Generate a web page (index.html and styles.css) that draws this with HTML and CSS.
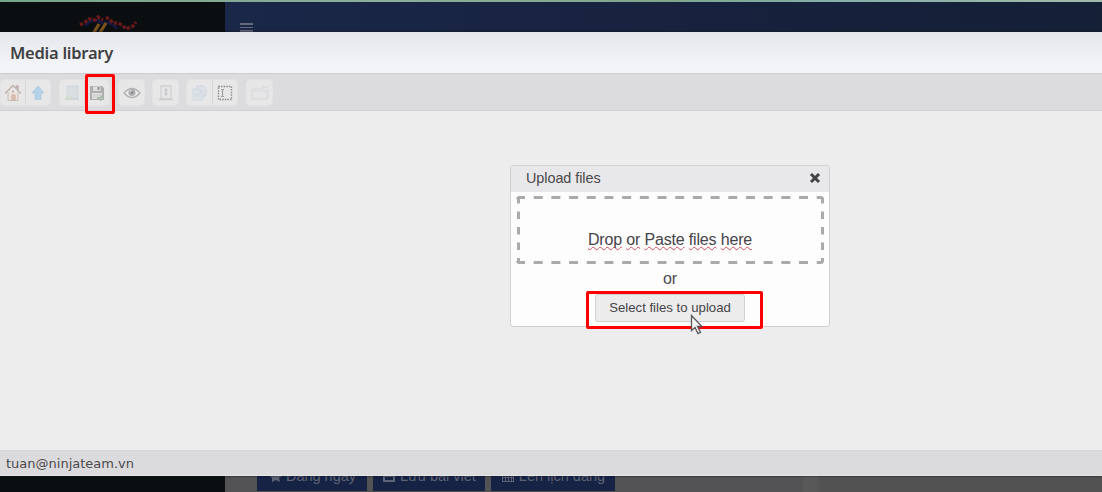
FILE: index.html
```html
<!DOCTYPE html>
<html lang="en">
<head>
<meta charset="utf-8">
<title>Media library</title>
<link rel="stylesheet" href="styles.css">
</head>
<body>
<div class="page">
  <div class="strip"></div>
  <div class="page-body">
    <aside class="sidebar">
      <svg class="brand" width="66" height="22" viewBox="0 0 66 22">
        <path d="M7 12c5-6 12-8 16-3 9-1 13 1 16 6" fill="none" stroke="#14183c" stroke-width="3"/>
        <path d="M15 20l6-10M21 20l7-11" stroke="#79521b" stroke-width="3.2"/>
        <path d="M2 11l5-3 4-3 6 1 3-3 5 3M28 3l4 3 3 3 5 0 4 2 4 4 7-3 3-4" fill="none" stroke="#65191a" stroke-width="3.4" stroke-dasharray="3.5 1.5"/>
      </svg>
    </aside>
    <main class="content">
      <header class="navbar"><span class="burger"><i></i><i></i><i></i></span></header>
      <div class="workspace">
        <div class="panel">
          <div class="post-actions">
            <div class="post-btn now"><svg width="14" height="14" viewBox="0 0 14 14"><path d="M0 2l5 3 4-4 1 4 4 2-3 2 1 4-4-2-4 2V9L1 6z"/></svg>Đăng ngay</div>
            <div class="post-btn save"><svg width="14" height="14" viewBox="0 0 14 14"><path d="M1 1h10l2 2v10H1zM3 8h8v3H3z" fill-rule="evenodd"/></svg>Lưu bài viết</div>
            <div class="post-btn plan"><svg width="14" height="14" viewBox="0 0 14 14"><path d="M1 2h12v11H1zM2 6v2h2V6zm3 0v2h2V6zm3 0v2h2V6zM2 9v3h2V9zm3 0v3h2V9zm3 0v3h2V9zm3-3v2h1V6zm0 3v3h1V9z" fill-rule="evenodd"/></svg>Lên lịch đăng</div>
          </div>
        </div>
        <div class="panel-edge"></div>
      </div>
    </main>
  </div>
</div>

<section class="modal">
  <header class="modal-head"><h1>Media library</h1></header>
  <div class="toolbar">
    <div class="tools home-tools">
      <div class="tool"><svg width="18" height="18" viewBox="0 0 18 18" fill="none"><path d="M4 8v8.500h10V8" fill="#e9e2df" stroke="#c9beb9"/><path d="M1 9.500L9 1.500l8 8M12.500 4V2h1.500v4" stroke="#bdb3ae" stroke-width="1.400"/><path d="M8 16v-5h3v5z" fill="#e0c4b8" stroke="#cfaa9a"/><path d="M9 6.500v2" stroke="#cdb0a5" stroke-width="2"/></svg></div>
      <div class="tool"><svg width="18" height="18" viewBox="0 0 18 18"><path d="M9 2l6 7h-3v6.500H6V9H3z" fill="#b3d2e8" stroke="#a8c6da" stroke-width=".7"/></svg></div>
    </div>
    <div class="tools upload-tools">
      <div class="tool faint"><svg width="18" height="18" viewBox="0 0 18 18"><path d="M4 2h11v13H4z" fill="#d6dce3" stroke="#ccd2d8"/><path d="M2 15h14" stroke="#cfcfd1" stroke-width="2"/><path d="M2 14l4-3v2h4v2H6v2z" fill="#c9dccb"/></svg></div>
      <div class="tool selected"><svg width="18" height="18" viewBox="0 0 18 18"><path d="M2 2h12l2 2v12H2z" fill="#adacae"/><path d="M5 2.500h7.500V7H5z" fill="#deddde"/><path d="M9.500 3h2v3h-2z" fill="#99999b"/><path d="M4 9h10v6H4z" fill="#e1e0e1"/><path d="M5 11h7M5 13h5" stroke="#cbcacc"/><path d="M9 13h3v-2.500l4.500 4-4.500 3v-2.500H9z" fill="#a8beaf"/></svg><span class="mark tool-mark"></span></div>
    </div>
    <div class="tools view-tools">
      <div class="tool"><svg width="18" height="18" viewBox="0 0 18 18"><path d="M1 9q8-9 16 0-8 9-16 0z" fill="#eeeded" stroke="#b1b0b2" stroke-width="1.300"/><circle cx="9" cy="8.500" r="3.600" fill="#b0b0b2"/><circle cx="9" cy="8.500" r="1.400" fill="#89898c"/><circle cx="7.800" cy="7.300" r=".8" fill="#eee"/></svg></div>
    </div>
    <div class="tools info-tools">
      <div class="tool"><svg width="18" height="18" viewBox="0 0 18 18"><path d="M4 2h10v13H4z" fill="#e6e5e7" stroke="#d0cfd2" stroke-width="1.300"/><path d="M2 15.500h14" stroke="#cbcbcd" stroke-width="1.500"/><path d="M9 4l2 2.500H9.700v3H11L9 12 7 9.500h1.300v-3H7z" fill="#c4c3c6"/></svg></div>
    </div>
    <div class="tools edit-tools">
      <div class="tool"><svg width="18" height="18" viewBox="0 0 18 18"><path d="M6 2h6l3 3v7H6z" fill="#dfe3e8" stroke="#cdd5dd"/><path d="M2 5h7l3 3v8H2z" fill="#dde2e8" stroke="#d0d7de"/><path d="M9 5v3h3M4 10h6M4 12h6" fill="none" stroke="#cfd7df"/></svg></div>
      <div class="tool"><svg width="18" height="18" viewBox="0 0 18 18" fill="none"><path d="M2.500 2.500h13v13h-13z" stroke="#8c8b8e" stroke-width="1.400" stroke-dasharray="1.500 1.100"/><path d="M5 5.500h3M6.500 5.500v7M5 12.500h3" stroke="#a09fa2" stroke-width="1.200"/></svg></div>
    </div>
    <div class="tools folder-tools">
      <div class="tool"><svg width="18" height="18" viewBox="0 0 18 18" fill="#e6e5e7"><path d="M1 15V5h10l1-2h5v12z" stroke="#d8d7d9"/><path d="M1 7h15v8H1z" stroke="#dad9db"/></svg></div>
    </div>
  </div>
  <div class="files">
    <div class="dialog">
      <div class="dialog-head"><span>Upload files</span><svg width="12" height="12" viewBox="0 0 12 12"><path d="M2 2l8 8M10 2l-8 8" stroke="#434145" stroke-width="3"/></svg></div>
      <div class="drop">
        <svg class="drop-line" width="309" height="70" viewBox="0 0 309 70" fill="none"><g stroke="#aaa" stroke-width="3"><path d="M0 2.500h309M0 67.500h309" stroke-dasharray="9 8.690"/><path d="M2.500 1v70M306.500 1v70" stroke-dasharray="7.500 8"/></g></svg>
        <span class="drop-text"><u>Drop</u> <u>or</u> <u>Paste</u> <u>files</u> <u>here</u></span>
      </div>
      <div class="or">or</div>
      <div class="select-row">
        <div class="select-btn">Select files to upload</div>
        <span class="mark select-mark"></span>
        <svg class="cursor" width="14" height="21" viewBox="0 0 14 21"><path d="M1.500 1.500v15l3.500-3 3 6 2.500-1.300-3-5.700h4.500z" fill="#f4f3f4" stroke="#59565b" stroke-width="1.300"/></svg>
      </div>
    </div>
  </div>
  <footer class="status">tuan@ninjateam.vn</footer>
</section>
</body>
</html>
```
FILE: styles.css
```css
* { box-sizing: border-box; }
body { margin: 0; width: 1102px; height: 492px; overflow: hidden; position: relative; font-family: "Liberation Sans", Arial, sans-serif; }
svg { display: block; flex: none; }

.page { height: 492px; display: flex; flex-direction: column; background: #525253; }
.strip { height: 2px; background: linear-gradient(90deg, #75a58d, #8dae9a 35%, #7fa78c 60%, #83b0a8 75%, #a3b9aa); }
.page-body { flex: 1; display: flex; }
.sidebar { width: 225px; background: #0b0e10; padding: 12px 0 0 78px; }
.content { flex: 1; display: flex; flex-direction: column; }
.navbar { height: 31px; padding: 21px 0 0 15px; background: linear-gradient(90deg, #1b2748, #172340 40%, #142036); }
.burger { display: flex; flex-direction: column; gap: 2px; width: 13px; }
.burger i { height: 1.500px; background: #62687a; }
.workspace { flex: 1; display: flex; align-items: stretch; }
.panel { width: 578px; display: flex; align-items: flex-end; padding: 0 0 1px 32px; background: #535254; }
.panel-edge { width: 16px; background: #595859; }
.post-actions { display: flex; gap: 6px; }
.post-btn { height: 28px; padding-bottom: 3px; display: flex; align-items: center; justify-content: center; gap: 4px; background: #172345; color: #5e6475; font-size: 14.500px; white-space: nowrap; }
.post-btn svg { fill: #5e6475; }
.now { width: 110px; }
.save { width: 112px; }
.plan { width: 124px; }

.modal { position: absolute; left: 0; top: 32px; width: 1102px; height: 444px; display: flex; flex-direction: column; background: #ededee; box-shadow: 0 0 2px #151519; }
.modal-head { height: 42px; padding: 8px 0 0 10px; border-bottom: 1px solid #cbcbcd; background: linear-gradient(#e5e6eb, #f3f4f8 80%); }
h1 { margin: 0; font: 600 16.500px/25px "Noto Sans", sans-serif; letter-spacing: -.25px; color: #403f42; white-space: nowrap; }
.toolbar { height: 37px; display: flex; align-items: flex-start; padding: 6px 0 0; border-bottom: 1px solid #d1d0d2; background: #dcdbdd; }
.tools { display: flex; height: 25px; border-radius: 4px; background: #e8e7e8; box-shadow: 0 0 0 1px #e3e2e4; }
.tool { width: 25px; display: flex; align-items: center; justify-content: center; position: relative; }
.tool + .tool { border-left: 1px solid #d7d6d8; }
.faint { opacity: .8; }
.home-tools { margin-left: 1px; width: 49px; }
.upload-tools { margin-left: 10px; width: 49px; }
.view-tools { margin-left: 10px; }
.info-tools { margin-left: 9px; }
.edit-tools { margin-left: 9px; }
.edit-tools .tool { width: 25px; }
.folder-tools { margin-left: 10px; }
.mark { position: absolute; border: 3px solid #f00; border-radius: 2px; }
.tool-mark { left: 0; top: -6px; width: 30px; height: 40px; }

.files { flex: 1; padding: 54px 0 0 510px; }
.dialog { width: 320px; height: 162px; border: 1px solid #d1d0d2; border-radius: 3px; background: #fdfdfd; display: flex; flex-direction: column; }
.dialog-head { height: 26px; display: flex; align-items: center; justify-content: space-between; padding: 0 8px 2px 15px; background: #e8e7e9; font-size: 14.400px; letter-spacing: -.05px; color: #49484b; }
.drop { position: relative; width: 308px; height: 68px; margin: 4px 0 0 5px; padding-top: 34px; text-align: center; color: #454347; font-size: 16px; line-height: 19px; border-radius: 4px; overflow: hidden; }
.drop-line { position: absolute; left: 0; top: -1px; }
.drop-text { letter-spacing: -.17px; }
.drop-text u { text-decoration: underline wavy #d54b62 1px; text-underline-offset: 1px; text-decoration-skip-ink: none; }
.or { height: 30px; padding-top: 5px; text-align: center; font-size: 16px; line-height: 19px; color: #4b494d; }
.select-row { position: relative; display: flex; justify-content: center; }
.select-btn { width: 150px; height: 28px; border: 1px solid #d1d0d2; border-radius: 3px; background: #ececed; color: #454347; font-size: 13.200px; line-height: 26px; text-align: center; white-space: nowrap; }
.select-mark { left: 75px; top: -3px; width: 177px; height: 38px; }
.cursor { position: absolute; left: 179px; top: 20px; }
.status { height: 26px; padding-left: 6px; border-top: 1px solid #d7d6d8; border-bottom: 1px solid #e5e4e6; background: #dbdadc; color: #4b4a4c; font: 13px/26px "DejaVu Sans", sans-serif; }
```
